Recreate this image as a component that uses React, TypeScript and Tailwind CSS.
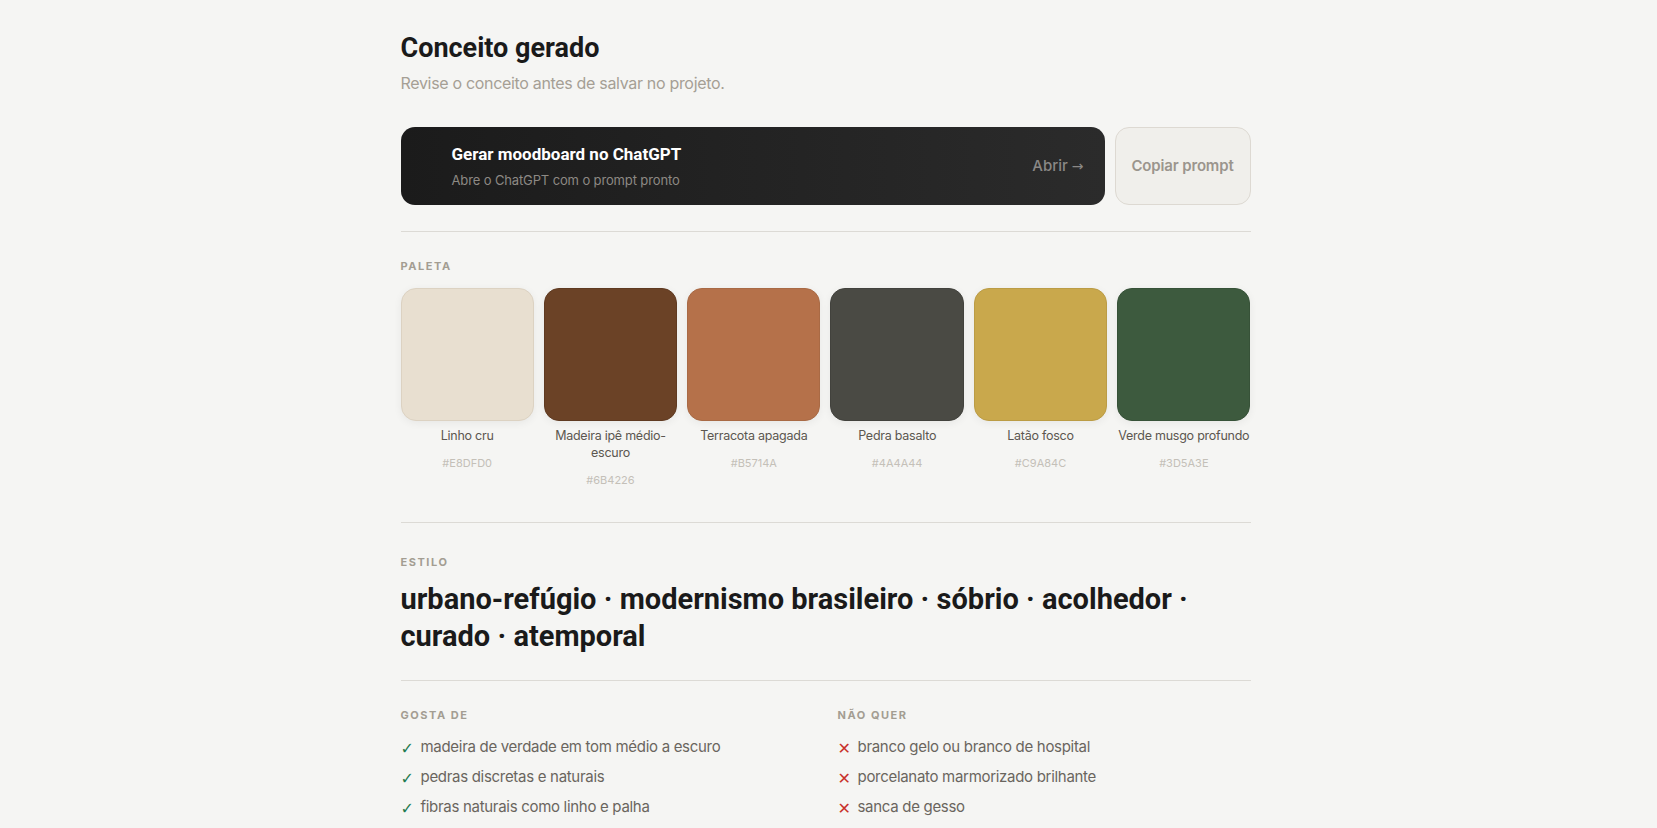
const palette = [
  { name: "Linho cru", hex: "#E8DFD0", cls: "bg-[#E8DFD0] border-[#dcd2c2]" },
  { name: "Madeira ipê médio-escuro", hex: "#6B4226", cls: "bg-[#6B4226] border-[#5f3a21]" },
  { name: "Terracota apagada", hex: "#B5714A", cls: "bg-[#B5714A] border-[#a96a45]" },
  { name: "Pedra basalto", hex: "#4A4A44", cls: "bg-[#4A4A44] border-[#42423d]" },
  { name: "Latão fosco", hex: "#C9A84C", cls: "bg-[#C9A84C] border-[#bb9c45]" },
  { name: "Verde musgo profundo", hex: "#3D5A3E", cls: "bg-[#3D5A3E] border-[#375238]" },
];

const likes = [
  "madeira de verdade em tom médio a escuro",
  "pedras discretas e naturais",
  "fibras naturais como linho e palha",
];

const dislikes = [
  "branco gelo ou branco de hospital",
  "porcelanato marmorizado brilhante",
  "sanca de gesso",
];

const display = { fontFamily: "Roboto, Inter, sans-serif" };
const glyph = { fontFamily: "'DejaVu Sans', sans-serif" };

function Label({ children }: { children: React.ReactNode }) {
  return (
    <div className="text-[11px] leading-4 font-bold uppercase tracking-[0.14em] text-[#a39d92]">
      {children}
    </div>
  );
}

export default function App() {
  return (
    <div
      className="min-h-screen bg-[#f5f5f3] text-[#1a1a1a]"
      style={{ fontFamily: "Inter, 'Noto Sans', sans-serif" }}
    >
      <div className="mx-auto w-[856px] pr-[6px] pt-[32px] pb-16">
        {/* cabeçalho */}
        <h1 className="text-[27px] leading-[33px] font-bold" style={display}>
          Conceito gerado
        </h1>
        <p className="mt-[6px] text-[16px] leading-6 tracking-[-0.02em] text-[#a59f95]">
          Revise o conceito antes de salvar no projeto.
        </p>

        {/* ações */}
        <div className="mt-8 flex gap-[10px]">
          <div className="flex-1 h-[78px] rounded-[14px] bg-gradient-to-r from-[#1b1b1b] to-[#2b2b2b] flex items-center justify-between pl-[51px] pr-[21px]">
            <div>
              <div className="text-[17px] leading-5 font-bold text-white" style={display}>
                Gerar moodboard no ChatGPT
              </div>
              <div className="mt-[8px] text-[13px] leading-4 tracking-[-0.01em] text-[#8d8984]">
                Abre o ChatGPT com o prompt pronto
              </div>
            </div>
            <span className="text-[15px] font-medium text-[#8a8886]">
              Abrir <span style={glyph} className="text-[14px]">→</span>
            </span>
          </div>
          <button className="w-[136px] h-[78px] rounded-[14px] border border-[#ddd9d2] bg-[#f0efeb] text-[15px] font-semibold tracking-[-0.01em] text-[#9b958d]">
            Copiar prompt
          </button>
        </div>

        <div className="mt-[26px] border-t border-[#dcdad5]" />

        {/* paleta */}
        <div className="pt-[26px]">
          <Label>Paleta</Label>
          <div className="mt-[14px] grid grid-cols-6 gap-[10px]">
            {palette.map((c) => (
              <div key={c.hex} className="flex flex-col items-center text-center">
                <div className={`w-full h-[133px] rounded-[15px] border shadow-[0_2px_8px_rgba(0,0,0,0.06)] ${c.cls}`} />
                <div className="mt-[6px] text-[12.5px] leading-[17px] tracking-[-0.02em] text-[#5c5750]">{c.name}</div>
                <div className="mt-[11px] text-[11px] leading-4 text-[#c4c0b8]">{c.hex}</div>
              </div>
            ))}
          </div>
        </div>

        <div className="mt-[34px] border-t border-[#dcdad5]" />

        {/* estilo */}
        <div className="pt-[31px]">
          <Label>Estilo</Label>
          <div className="mt-[11px] text-[29px] leading-[37px] font-bold" style={display}>
            urbano-refúgio · modernismo brasileiro · sóbrio · acolhedor · curado · atemporal
          </div>
        </div>

        <div className="mt-[25px] border-t border-[#dcdad5]" />

        {/* gosta / não quer */}
        <div className="pt-[26px] grid grid-cols-2 gap-6">
          <div>
            <Label>Gosta de</Label>
            <ul className="mt-[13px] flex flex-col gap-2">
              {likes.map((t) => (
                <li key={t} className="flex items-center gap-[7px] text-[15px] leading-[22px] tracking-[-0.02em] text-[#6a655e]">
                  <span style={glyph} className="w-[13px] text-[16px] font-bold text-[#1f7a4f] translate-y-[2px]">✓</span>
                  {t}
                </li>
              ))}
            </ul>
          </div>
          <div>
            <Label>Não quer</Label>
            <ul className="mt-[13px] flex flex-col gap-2">
              {dislikes.map((t) => (
                <li key={t} className="flex items-center gap-[7px] text-[15px] leading-[22px] tracking-[-0.02em] text-[#6a655e]">
                  <span style={glyph} className="w-[13px] text-[16px] text-[#c8322a] translate-y-[2px]">✕</span>
                  {t}
                </li>
              ))}
            </ul>
          </div>
        </div>
      </div>
    </div>
  );
}
